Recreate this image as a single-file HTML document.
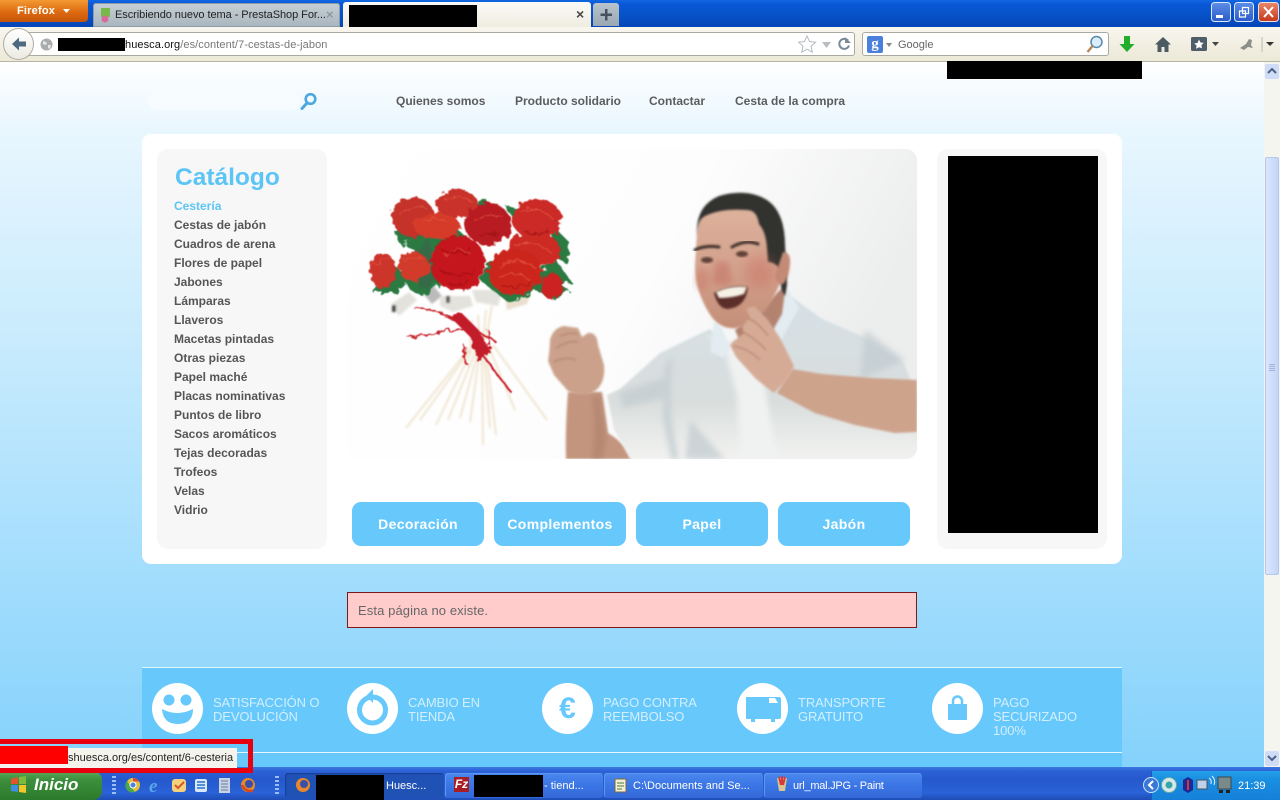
<!DOCTYPE html>
<html><head><meta charset="utf-8"><title>Huesca</title>
<style>
html,body{margin:0;padding:0;width:1280px;height:800px;overflow:hidden;background:#fff;font-family:"Liberation Sans",sans-serif}
div,span,svg{position:absolute;display:block}
.t{white-space:nowrap}
.nav{top:94px;font:bold 12px/15px "Liberation Sans",sans-serif;color:#5c5c5c;white-space:nowrap}
.c{left:174px;margin-top:1px;font:bold 12px/15px "Liberation Sans",sans-serif;color:#555;white-space:nowrap}
.b{top:502px;width:132px;height:44px;border-radius:9px;background:#66c8fb;color:#fff;font:bold 14px/44px "Liberation Sans",sans-serif;text-align:center;letter-spacing:.35px}
.f{top:696px;font:13px/14px "Liberation Sans",sans-serif;color:#d2efff;white-space:nowrap;letter-spacing:-.12px}
.ci{top:683px;width:51px;height:51px;border-radius:50%;background:#fff}
.task{top:773px;height:25px;border-radius:3px;background:linear-gradient(#4a87ee,#3a74e4 55%,#3569d8);color:#fff;font:11px/24px "Liberation Sans",sans-serif;white-space:nowrap;box-shadow:inset 1px 1px 0 #5c97f2}
</style></head><body>

<!-- page background -->
<div style="left:0;top:62px;width:1264px;height:705px;background:linear-gradient(#fff 0,#e8f6fe 70px,#c5eafd 300px,#a5defd 500px,#85d2fc 700px)"></div>

<!-- title bar -->
<div style="left:0;top:0;width:1280px;height:27px;background:linear-gradient(#1268e0 0,#0a58d8 4px,#0752c8 15px,#0546b8 26px)"></div>
<div style="left:0;top:0;width:88px;height:22px;border-radius:0 0 4px 0;background:linear-gradient(#f39a33,#dd6a10 55%,#c4540a)"></div>
<div class="t" style="left:17px;top:4px;font:bold 11px/14px 'Liberation Sans',sans-serif;color:#fff;letter-spacing:.2px">Firefox</div>
<svg style="left:62px;top:8px" width="10" height="6"><path d="M1 1h7L4.500 5z" fill="#fff"/></svg>

<!-- tabs -->
<div style="left:93px;top:3px;width:247px;height:24px;background:linear-gradient(#c6cfd6,#a9b5be);border-radius:3px 3px 0 0;box-shadow:inset 0 0 0 1px #8d9ca8"></div>
<svg style="left:99px;top:8px" width="13" height="15"><rect x="2" y="0" width="9" height="9" fill="#79b94a"/><circle cx="6" cy="11" r="3.500" fill="#d86a9a"/></svg>
<div class="t" style="left:115px;top:8px;font:11px/15px 'Liberation Sans',sans-serif;color:#222;letter-spacing:-.06px">Escribiendo nuevo tema - PrestaShop For...</div>
<div class="t" style="left:326px;top:7px;font:bold 13px/15px 'Liberation Sans',sans-serif;color:#8d979e">×</div>
<div style="left:343px;top:2px;width:248px;height:26px;background:linear-gradient(#fbfaf6,#efece0);border-radius:3px 3px 0 0"></div>
<div style="left:349px;top:5px;width:128px;height:22px;background:#000"></div>
<div class="t" style="left:576px;top:6px;font:bold 14px/16px 'Liberation Sans',sans-serif;color:#444">×</div>
<div style="left:593px;top:3px;width:26px;height:23px;background:linear-gradient(#b9c4cc,#9aa8b2);border-radius:3px 3px 0 0"></div>
<svg style="left:599px;top:8px" width="14" height="14"><path d="M6 1h2.500v4.500H13V8H8.500v4.500H6V8H1.500V5.500H6z" fill="#46535e"/></svg>

<!-- window controls -->
<svg style="left:1211px;top:2px" width="68" height="21">
<defs><linearGradient id="wb" x1="0" y1="0" x2="0" y2="1"><stop offset="0" stop-color="#5c8ee8"/><stop offset="1" stop-color="#2a5ac8"/></linearGradient><linearGradient id="wr" x1="0" y1="0" x2="0" y2="1"><stop offset="0" stop-color="#e8886a"/><stop offset="1" stop-color="#c4381c"/></linearGradient></defs>
<rect x=".5" y=".5" width="19" height="19" rx="3" fill="url(#wb)" stroke="#dfe8f8"/>
<rect x="5" y="13" width="7" height="3" fill="#fff"/>
<rect x="23.500" y=".5" width="19" height="19" rx="3" fill="url(#wb)" stroke="#dfe8f8"/>
<path d="M31.500 5.500h6v6h-6zM28.500 9h6v6h-6z" fill="none" stroke="#fff" stroke-width="1.200"/>
<rect x="47.500" y=".5" width="20" height="19" rx="3" fill="url(#wr)" stroke="#f0e0d8"/>
<path d="M53 5l9 10M62 5l-9 10" stroke="#fff" stroke-width="2"/>
</svg>

<!-- navigation bar -->
<div style="left:0;top:27px;width:1280px;height:35px;background:linear-gradient(#f8f6ee,#ece9d8);border-bottom:1px solid #b9b5a4;box-sizing:border-box"></div>
<div style="left:28px;top:32px;width:827px;height:24px;background:#fff;border:1px solid #a9a9a2;border-radius:0 3px 3px 0;box-sizing:border-box"></div>
<div style="left:3px;top:28px;width:31px;height:32px;border-radius:50%;background:linear-gradient(#fff,#ecebe2);border:1px solid #aeaca2;box-sizing:border-box"></div>
<svg style="left:10px;top:36px" width="18" height="16"><path d="M9 1.500L2 8l7 6.500V10.500h7v-5H9z" fill="#4e6a80"/></svg>
<svg style="left:40px;top:38px" width="13" height="13"><circle cx="6.500" cy="6.500" r="6" fill="#a9adb0"/><path d="M3 3l3 1 1 2-2 1-2-1zM8 7l3 0-1 4-2-1z" fill="#e8e8e8"/></svg>
<div style="left:58px;top:38px;width:67px;height:13px;background:#000"></div>
<div class="t" style="left:125px;top:38px;font:11px/15px 'Liberation Sans',sans-serif;color:#777;letter-spacing:.08px"><span style="position:static;display:inline;color:#111">huesca.org</span>/es/content/7-cestas-de-jabon</div>
<svg style="left:798px;top:35px" width="54" height="18">
<path d="M9 1l2.500 5.500 6 .7-4.500 4 1.300 6L9 14.200 3.700 17.200 5 11.200.5 7.200l6-.7z" fill="#fff" stroke="#b5bcc2"/>
<path d="M24 7h9l-4.500 6z" fill="#b8bdc2"/>
<path d="M50 5.500a5 5 0 1 0 1 5" fill="none" stroke="#7a8a96" stroke-width="2"/><path d="M47 2v6h6z" fill="#7a8a96"/>
</svg>
<div style="left:862px;top:32px;width:247px;height:24px;background:#fff;border:1px solid #a9a9a2;border-radius:3px;box-sizing:border-box"></div>
<div class="t" style="left:867px;top:36px;width:16px;height:17px;background:#4a7fdc;border-radius:2px;color:#fff;font:bold 15px/16px 'Liberation Serif',serif;text-align:center">g</div>
<svg style="left:886px;top:43px" width="7" height="4"><path d="M0 0h6L3 4z" fill="#888"/></svg>
<div class="t" style="left:898px;top:38px;font:11px/14px 'Liberation Sans',sans-serif;color:#666">Google</div>
<svg style="left:1085px;top:35px" width="19" height="19"><circle cx="11.500" cy="7" r="5.500" fill="#d9eefb" stroke="#5a88a8" stroke-width="1.500"/><path d="M7.500 11L2.500 17" stroke="#b58a5a" stroke-width="2.500"/></svg>
<svg style="left:1119px;top:36px" width="16" height="17"><path d="M5 0h6v8h4.500L8 16 .5 8H5z" fill="#22ad2a"/></svg>
<svg style="left:1155px;top:37px" width="16" height="15"><path d="M8 0L0 7.500h2.500V15h4v-5h3v5h4V7.500H16z" fill="#4c5a62"/></svg>
<svg style="left:1191px;top:37px" width="30" height="14"><rect width="16" height="14" rx="1.500" fill="#4f5e68"/><path d="M8 2.500l1.500 3 3.200.4-2.300 2.200.6 3.200L8 10.200 5 11.800l.6-3.200L3.300 6.400l3.200-.4z" fill="#fff"/><path d="M21 5h7l-3.500 4z" fill="#444"/></svg>
<svg style="left:1238px;top:36px" width="38" height="17"><path d="M2 12l6-4 3-5 3 1-1 5 2 3-5-1-4 3z" fill="#8a8f88"/><path d="M24 1v15" stroke="#bdbaac"/><path d="M28 6h8l-4 4z" fill="#333"/></svg>

<div style="left:947px;top:61px;width:195px;height:18px;background:#000"></div>

<!-- scrollbar -->
<div style="left:1264px;top:62px;width:16px;height:705px;background:#f5f5f0"></div>
<div style="left:1265px;top:64px;width:14px;height:15px;background:#cfdcf8;border-radius:2px"></div>
<svg style="left:1267px;top:68px" width="10" height="7"><path d="M1 5l4-4 4 4" fill="none" stroke="#4d6185" stroke-width="2"/></svg>
<div style="left:1265px;top:157px;width:14px;height:418px;background:linear-gradient(90deg,#dbe6fb,#c3d5fa);border:1px solid #b5c8ec;box-sizing:border-box;border-radius:2px"></div>
<div style="left:1269px;top:364px;width:6px;height:7px;background:repeating-linear-gradient(#9eb4da 0 1px,transparent 1px 2px)"></div>
<div style="left:1265px;top:751px;width:14px;height:15px;background:#cfdcf8;border-radius:2px"></div>
<svg style="left:1267px;top:755px" width="10" height="7"><path d="M1 1l4 4 4-4" fill="none" stroke="#4d6185" stroke-width="2"/></svg>

<!-- header search and links -->
<div style="left:148px;top:92px;width:152px;height:18px;background:#f6fcff;border-radius:9px"></div>
<svg style="left:299px;top:92px" width="20" height="18"><circle cx="11.500" cy="7" r="4.800" fill="none" stroke="#4da7e0" stroke-width="2.600"/><path d="M8 11l-5 5.500" stroke="#4da7e0" stroke-width="3" stroke-linecap="round"/></svg>
<div class="nav" style="left:396px">Quienes somos</div>
<div class="nav" style="left:515px">Producto solidario</div>
<div class="nav" style="left:649px">Contactar</div>
<div class="nav" style="left:735px">Cesta de la compra</div>

<!-- white panel -->
<div style="left:142px;top:134px;width:980px;height:430px;background:#fff;border-radius:9px"></div>
<div style="left:157px;top:149px;width:170px;height:400px;background:#f7f7f7;border-radius:11px"></div>
<div class="t" style="left:175px;top:163px;font:bold 24.500px/30px 'Liberation Sans',sans-serif;color:#5cc5f5">Catálogo</div>
<div class="c" style="top:198px;color:#5cc5f5">Cestería</div>
<div class="c" style="top:217px">Cestas de jabón</div>
<div class="c" style="top:236px">Cuadros de arena</div>
<div class="c" style="top:255px">Flores de papel</div>
<div class="c" style="top:274px">Jabones</div>
<div class="c" style="top:293px">Lámparas</div>
<div class="c" style="top:312px">Llaveros</div>
<div class="c" style="top:331px">Macetas pintadas</div>
<div class="c" style="top:350px">Otras piezas</div>
<div class="c" style="top:369px">Papel maché</div>
<div class="c" style="top:388px">Placas nominativas</div>
<div class="c" style="top:407px">Puntos de libro</div>
<div class="c" style="top:426px">Sacos aromáticos</div>
<div class="c" style="top:445px">Tejas decoradas</div>
<div class="c" style="top:464px">Trofeos</div>
<div class="c" style="top:483px">Velas</div>
<div class="c" style="top:502px">Vidrio</div>

<!-- hero photo -->
<svg style="left:347px;top:149px" width="570" height="310" viewBox="347 149 570 310">
<defs>
<clipPath id="hc"><rect x="347" y="149" width="570" height="310" rx="11"/></clipPath>
<linearGradient id="bg" x1="0" y1="0" x2="1" y2=".3"><stop offset="0" stop-color="#fff"/><stop offset=".6" stop-color="#fdfdfd"/><stop offset="1" stop-color="#eceded"/></linearGradient>
<linearGradient id="sh" x1="0" y1="0" x2="0" y2="1"><stop offset="0" stop-color="#d6e0e5"/><stop offset=".65" stop-color="#d9dedd"/><stop offset="1" stop-color="#f2f2f0"/></linearGradient>
<linearGradient id="fa" x1="0" y1="0" x2="0" y2="1"><stop offset="0" stop-color="#dfb6a0"/><stop offset=".55" stop-color="#d3a08c"/><stop offset="1" stop-color="#c48f78"/></linearGradient>
<filter id="b1" x="-10%" y="-10%" width="120%" height="120%"><feGaussianBlur stdDeviation="1"/></filter>
<filter id="b3" x="-20%" y="-20%" width="140%" height="140%"><feGaussianBlur stdDeviation="3"/></filter>
<filter id="b6" x="-30%" y="-30%" width="160%" height="160%"><feGaussianBlur stdDeviation="6"/></filter>
<filter id="rag" x="-10%" y="-10%" width="120%" height="120%"><feTurbulence type="fractalNoise" baseFrequency=".16" numOctaves="2" seed="4" result="n"/><feDisplacementMap in="SourceGraphic" in2="n" scale="9" result="d"/><feGaussianBlur in="d" stdDeviation=".55"/></filter>
</defs>
<g clip-path="url(#hc)">
<rect x="347" y="149" width="570" height="310" fill="url(#bg)"/>
<!-- sticks -->
<g stroke="#e8d6b4" stroke-width="1.200" fill="none" filter="url(#b1)">
<path d="M468 350L406 428M470 350L420 420M472 350L436 425M476 350L448 420M478 352L460 418M480 350L470 422M482 350L483 445M484 350L490 428M486 350L496 435M490 350L515 410M493 345L547 420M472 320L470 350M478 315L480 345M486 310L483 340M492 305L486 340"/>
</g>
<!-- ribbon -->
<g stroke="#c8202c" fill="none" filter="url(#rag)">
<path d="M415 309q40 0 62 30M407 337q35-6 60-8M445 317q25 5 30 25q10 18 36 50M465 345q-5 15 5 22M478 332q15 8 18 10M488 330q5 10-2 20" stroke-width="2"/>
<path d="M450 316l22 22 6 24 12-10-12-22-16-16z" fill="#c21c2c" stroke-width="1"/>
</g>
<!-- cards -->
<g fill="#e4e2dc" filter="url(#b1)">
<path d="M391 304l18-12 8 8-18 16z"/><path d="M420 290l12-6 10 12-10 8z" fill="#bbb"/><path d="M440 296h30l3 10-20 6-13-6z"/><path d="M472 290h30l-4 16-22-4z"/><path d="M505 298l26-6-4 12-20 6z" fill="#eadfce"/>
<rect x="392" y="305" width="4" height="7" fill="#444"/><rect x="446" y="296" width="4" height="7" fill="#555"/>
</g>
<!-- leaves -->
<g fill="#2c7a42" filter="url(#rag)">
<path d="M373 293l12-30 30 12-18 18z"/><path d="M410 290l-8-16 30-10 8 20-18 12z"/><path d="M405 245l35-30 30 25-35 14-18-2z"/><path d="M465 212l20-14 10 14-26 10z"/><path d="M505 205l30 8 14 26-30-10z"/><path d="M553 226l16 16-1 22-18-10z"/><path d="M555 258l16 24-24 7-10-16z"/><path d="M480 280l30 24 25-14 20 10 14-10-40-22-40-8z"/><path d="M428 236l-17 24 10 32 18-12z" fill="#356c46"/><path d="M395 232l20-18 10 18-24 14z"/>
</g>
<!-- flowers -->
<g filter="url(#rag)">
<ellipse cx="413" cy="217" rx="21" ry="20" fill="#c4302c"/><ellipse cx="457" cy="204" rx="21" ry="14" fill="#c8302a"/>
<ellipse cx="437" cy="226" rx="23" ry="13" fill="#d63b2c"/><ellipse cx="488" cy="224" rx="23" ry="21" fill="#b81f24"/>
<ellipse cx="537" cy="219" rx="25" ry="20" fill="#cc2a28"/><ellipse cx="383" cy="271" rx="13" ry="18" fill="#cc3429"/>
<ellipse cx="414" cy="267" rx="16" ry="14" fill="#d23a2c"/><ellipse cx="533" cy="250" rx="27" ry="18" fill="#cc2a22"/>
<ellipse cx="458" cy="263" rx="27" ry="28" fill="#c4141c"/><ellipse cx="515" cy="272" rx="27" ry="23" fill="#cc261c"/>
<ellipse cx="552" cy="286" rx="11" ry="13" fill="#cc2320"/>
</g>
<g fill="none" stroke="#ea6450" stroke-width="1.200" opacity=".6" filter="url(#rag)">
<path d="M400 215q12-12 28-6M445 200q12-8 28 2M475 222q12-10 28-6M520 212q15-8 32 6M500 268q14-14 36 0M445 256q12-12 26-2M515 246q16-8 36 6M372 268q8-10 20-8M404 262q8-8 20-2M500 278q14-10 30 2M425 222q10-6 22 0"/>
</g>
<g fill="none" stroke="#8c0c12" stroke-width="1.200" opacity=".7" filter="url(#rag)"><path d="M440 270q18 10 36 0M448 282q12 4 20-2M500 284q14 6 32-2M478 234q10 4 20-2M525 232q12 4 24-2M442 250q14 6 30 0"/></g>

<!-- left arm -->
<path d="M568 392q-3 40-2 67h66q-5-14-24-26l-6-41z" fill="#c4957e" filter="url(#b1)"/>
<path d="M600 395l6 45-4 19h-10q5-35 0-62z" fill="#a67a66" opacity=".5" filter="url(#b3)"/>
<!-- fist -->
<path d="M550 340q3-12 14-14l14 2 4 9 6-4q9-1 10 12l6 20q2 20-12 28-12 4-24-2l-14-16-6-14q2-12 2-21z" fill="#cba18b" filter="url(#b1)"/>
<path d="M556 348q12-8 22-6M554 362q12-6 22-2M560 336q10-4 18-2" stroke="#ab7c64" fill="none" filter="url(#b1)"/>
<!-- shirt -->
<path d="M607 395l13-6 40-36 50-24 16 15 46-17 20-30 30 22 42 18 40 26 13 34v62H630l-16-30z" fill="url(#sh)" filter="url(#b1)"/>
<path d="M673 355q-5 40 1 80l5 24h-8l-8-40 2-52zM620 392l45-14-2 20-40 10zM905 360l-40-30-5 50zM690 420l35 39h-40z" fill="#c2ccd0" opacity=".75" filter="url(#b3)"/>
<path d="M705 335l20 15 12 45 4 64h36l-10-60-6-35-24-20z" fill="#f0f2f2" filter="url(#b3)"/>
<path d="M714 322l-4 30 14 6 6-10-8-20zM787 288l12 20-18 32-24 18-4-6 18-20z" fill="#e2ecf1" filter="url(#b1)"/>
<!-- neck -->
<path d="M735 330l8 18 22-4 17-30 4-30-20 20z" fill="#b48370" filter="url(#b1)"/>
<!-- head -->
<path d="M697 232q2-30 38-36 34-3 46 26l4 34q-1 20-8 34-12 30-40 38-16 2-26-12-16-24-16-50z" fill="url(#fa)" filter="url(#b1)"/>
<path d="M697 236q-2-30 22-40 28-8 48 4 18 12 18 46l2 38-2 12q-6-8-4-26-6-8-13-8l-1-14q-1-16-8-24-2-14-12-14-26-2-42 6-8 4-8 20z" fill="#31302e" filter="url(#b1)"/>
<path d="M783 252q8 0 7 12-1 14-7 20-6 2-8-8z" fill="#c48b76" filter="url(#b1)"/>
<!-- features -->
<path d="M695 250q10-5 24-3M732 247q14-8 26-3" stroke="#3d2f2b" stroke-width="3" fill="none" stroke-linecap="round" filter="url(#b1)"/>
<ellipse cx="707" cy="260" rx="6" ry="3" fill="#5e4238" filter="url(#b1)"/><ellipse cx="742" cy="254" rx="6" ry="3" fill="#5e4238" filter="url(#b1)"/>
<path d="M716 262q-3 14-4 20 8 6 20 0l-4-20z" fill="#c87d6c" opacity=".7" filter="url(#b3)"/>
<path d="M714 293q18-9 34-6-2 20-20 22-10 0-14-16z" fill="#5b2e2a" filter="url(#b1)"/>
<path d="M716 292q16-7 31-5l-3 7q-12 4-25 4z" fill="#f5f1e4" filter="url(#b1)"/>
<ellipse cx="702" cy="280" rx="7" ry="11" fill="#c8705e" opacity=".35" filter="url(#b3)"/><ellipse cx="760" cy="272" rx="14" ry="16" fill="#c8705e" opacity=".45" filter="url(#b6)"/>
<!-- right arm & hand -->
<path d="M792 369l30 5 50 4 45 2v52l-22 1-40-8-40-12-38-20z" fill="#cda38c" filter="url(#b1)"/>
<path d="M730 345l4-4 10-8-2-6 8-10-4-8 8-3 14 14 12 18 14 28-6 13-14 14-18-14-20-22z" fill="#d6ab96" filter="url(#b1)"/>
<path d="M734 346q15 3 26 14M742 332q12 5 24 18M748 318q12 6 20 18" stroke="#ac7c66" fill="none" filter="url(#b1)"/>
</g>
</svg>

<!-- right column -->
<div style="left:937px;top:149px;width:170px;height:400px;background:#f7f7f7;border-radius:11px"></div>
<div style="left:948px;top:156px;width:150px;height:377px;background:#000"></div>

<!-- buttons -->
<div class="b" style="left:352px">Decoración</div>
<div class="b" style="left:494px">Complementos</div>
<div class="b" style="left:636px">Papel</div>
<div class="b" style="left:778px">Jabón</div>

<!-- error -->
<div class="t" style="left:347px;top:592px;width:570px;height:36px;box-sizing:border-box;background:#ffcccb;border:1px solid #7a1a1a;padding-left:10px;font:13px/35px 'Liberation Sans',sans-serif;color:#666;letter-spacing:.1px">Esta página no existe.</div>

<!-- footer strip -->
<div style="left:142px;top:667px;width:980px;height:100px;background:#66c8fb"></div>
<div style="left:142px;top:667px;width:980px;height:1px;background:#e6f6ff"></div>
<div style="left:142px;top:752px;width:980px;height:1px;background:#e6f6ff"></div>
<div class="ci" style="left:152px"></div>
<svg style="left:152px;top:683px" width="51" height="51"><circle cx="17" cy="17" r="5.500" fill="#66c8fb"/><circle cx="34" cy="17" r="5.500" fill="#66c8fb"/><path d="M10 26q15 8 31 0 0 15-15 15Q11 41 10 26z" fill="#66c8fb"/></svg>
<div class="ci" style="left:347px"></div>
<svg style="left:347px;top:683px" width="51" height="51"><circle cx="25.500" cy="27" r="13" fill="none" stroke="#66c8fb" stroke-width="5"/><path d="M26 6l-7 7 7 7z" fill="#66c8fb"/></svg>
<div class="ci" style="left:542px"></div>
<div class="t" style="left:542px;top:683px;width:51px;text-align:center;font:bold 30px/51px 'Liberation Sans',sans-serif;color:#66c8fb">€</div>
<div class="ci" style="left:737px"></div>
<svg style="left:737px;top:683px" width="51" height="51"><path d="M9 14h33a2 2 0 0 1 2 2v18a2 2 0 0 1-2 2h-4v3h-4v-3H18v3h-4v-3H9z" fill="#66c8fb"/><path d="M32 15h6l3 5h-9z" fill="#fff"/></svg>
<div class="ci" style="left:932px"></div>
<svg style="left:932px;top:683px" width="51" height="51"><rect x="16" y="21" width="19" height="16" fill="#66c8fb"/><path d="M21 21v-3a4.500 4.500 0 0 1 9 0v3" fill="none" stroke="#66c8fb" stroke-width="2.500"/></svg>
<div class="f" style="left:213px">SATISFACCIÓN O<br>DEVOLUCIÓN</div>
<div class="f" style="left:408px">CAMBIO EN<br>TIENDA</div>
<div class="f" style="left:603px">PAGO CONTRA<br>REEMBOLSO</div>
<div class="f" style="left:798px">TRANSPORTE<br>GRATUITO</div>
<div class="f" style="left:993px">PAGO<br>SECURIZADO<br>100%</div>

<!-- taskbar -->
<div style="left:0;top:767px;width:1280px;height:33px;background:linear-gradient(#3a78e0 0,#2c62d6 4px,#2558cc 12px,#2a62d8 26px,#1e4cb4 33px)"></div>
<div class="t" style="left:0;top:771px;width:102px;height:29px;border-radius:0 9px 9px 0;background:linear-gradient(#5aaa5a,#3c8f3c 30%,#2c7a2c)"></div>
<svg style="left:10px;top:776px" width="18" height="18"><path d="M1 3l7-2v7H1z" fill="#e2532e"/><path d="M9 1l7-1v8H9z" fill="#7fba3a"/><path d="M1 9h7v7l-7-1z" fill="#3f8fe0"/><path d="M9 9h7v8l-7-1z" fill="#f5c52c"/></svg>
<div class="t" style="left:34px;top:775px;font:italic bold 17px/20px 'Liberation Sans',sans-serif;color:#fff">Inicio</div>
<div style="left:112px;top:776px;width:4px;height:20px;background:repeating-linear-gradient(#9cc0f5 0 2px,transparent 2px 4px)"></div>
<div style="left:275px;top:776px;width:4px;height:20px;background:repeating-linear-gradient(#9cc0f5 0 2px,transparent 2px 4px)"></div>
<svg style="left:125px;top:777px" width="132" height="17">
<circle cx="8" cy="8" r="7" fill="#e2c23a"/><path d="M8 1a7 7 0 0 1 6 3.500H8z" fill="#d94a3a"/><path d="M2 4l4 6 4 5a7 7 0 0 1-8-11z" fill="#4aa84a"/><circle cx="8" cy="8" r="3" fill="#4a82e0" stroke="#fff"/>
<text x="24" y="15" font-family="Liberation Serif,serif" font-style="italic" font-weight="bold" font-size="19" fill="#58a8e8">e</text>
<rect x="47" y="2" width="14" height="13" rx="3" fill="#f5d27a"/><path d="M50 8l3 3 6-6" stroke="#d2572a" stroke-width="2" fill="none"/>
<rect x="70" y="2" width="12" height="13" rx="2" fill="#d8e8f8"/><path d="M72 5h8M72 8h8M72 11h8" stroke="#2a70c8" stroke-width="1.500"/>
<rect x="94" y="1" width="11" height="15" fill="#c8d4e4"/><path d="M96 4h7M96 7h7M96 10h7M96 13h7" stroke="#6a7a9a"/>
<circle cx="123" cy="8" r="7" fill="#e8882a"/><circle cx="124" cy="7" r="4" fill="#3a4fa8"/><path d="M117 8q3 7 11 6" stroke="#d8481a" stroke-width="2.500" fill="none"/>
</svg>
<div class="task" style="left:285px;width:159px;background:#2051b5;box-shadow:inset 1px 1px 1px #173f91"></div>
<svg style="left:295px;top:777px" width="16" height="16"><circle cx="8" cy="8" r="7" fill="#e8882a"/><circle cx="9" cy="7" r="4" fill="#3a4fa8"/></svg>
<div style="left:316px;top:775px;width:68px;height:25px;background:#000"></div>
<div class="t" style="left:386px;top:779px;font:11px/15px 'Liberation Sans',sans-serif;color:#fff">Huesc...</div>
<div class="task" style="left:445px;width:158px"></div>
<div class="t" style="left:454px;top:777px;width:15px;height:15px;background:#a81c24;color:#fff;font:italic bold 12px/15px 'Liberation Sans',sans-serif;text-align:center">Fz</div>
<div style="left:474px;top:775px;width:69px;height:22px;background:#000"></div>
<div class="t" style="left:544px;top:779px;font:11px/15px 'Liberation Sans',sans-serif;color:#fff">- tiend...</div>
<div class="task" style="left:604px;width:159px"></div>
<svg style="left:614px;top:777px" width="15" height="16"><rect x="1" y="2" width="11" height="13" fill="#f3efd8" stroke="#7a6a3a"/><path d="M3 6h7M3 9h7M3 12h5" stroke="#4a7a3a"/></svg>
<div class="t" style="left:633px;top:779px;font:11px/15px 'Liberation Sans',sans-serif;color:#fff">C:\Documents and Se...</div>
<div class="task" style="left:764px;width:158px"></div>
<svg style="left:775px;top:776px" width="14" height="18"><path d="M2 2l2 13h6l2-13z" fill="#d8c890"/><path d="M4 1l2 8M7 0v9M10 1l-2 8" stroke="#d83a3a" stroke-width="2"/></svg>
<div class="t" style="left:793px;top:779px;font:11px/15px 'Liberation Sans',sans-serif;color:#fff;letter-spacing:-.25px">url_mal.JPG - Paint</div>

<!-- tray -->
<div style="left:1151px;top:771px;width:129px;height:29px;background:linear-gradient(#24a0ea,#1a8fe0 30%,#1580d8);border-left:1px solid #0e60b8;box-sizing:border-box"></div>
<svg style="left:1142px;top:775px" width="108" height="20">
<circle cx="9" cy="10" r="7.500" fill="#3a78d8" stroke="#cfe2fa"/><path d="M11 6l-4 4 4 4" stroke="#fff" stroke-width="2" fill="none"/>
<circle cx="27" cy="10" r="7.500" fill="#d8e8e8" stroke="#6aa"/><circle cx="27" cy="10" r="3.500" fill="#3aa5a8"/>
<path d="M46 2l5 3v10l-5 3-5-3V5z" fill="#1a2a98"/><path d="M46 5v10" stroke="#e03030" stroke-width="2"/>
<rect x="55" y="5" width="10" height="9" fill="#c0d0e8" stroke="#456"/><path d="M67 3q3 2 2 6M70 1q4 4 2 9" stroke="#eef" fill="none"/>
<rect x="76" y="2" width="13" height="12" fill="#7a8a8a" stroke="#3a4a4a"/><rect x="77" y="15" width="4" height="3" fill="#222"/><rect x="84" y="15" width="4" height="3" fill="#222"/>
</svg>
<div class="t" style="left:1238px;top:779px;font:11px/15px 'Liberation Sans',sans-serif;color:#fff">21:39</div>

<!-- status tooltip with red highlight -->
<div style="left:0;top:748px;width:237px;height:20px;background:#f5f4ec"></div>
<div style="left:0;top:746px;width:68px;height:18px;background:#ff0000"></div>
<div class="t" style="left:68px;top:751px;font:11px/15px 'Liberation Sans',sans-serif;color:#222">shuesca.org/es/content/6-cesteria</div>
<div style="left:-6px;top:739px;width:259px;height:34px;border:5px solid #e8000e;box-sizing:border-box"></div>
</body></html>
